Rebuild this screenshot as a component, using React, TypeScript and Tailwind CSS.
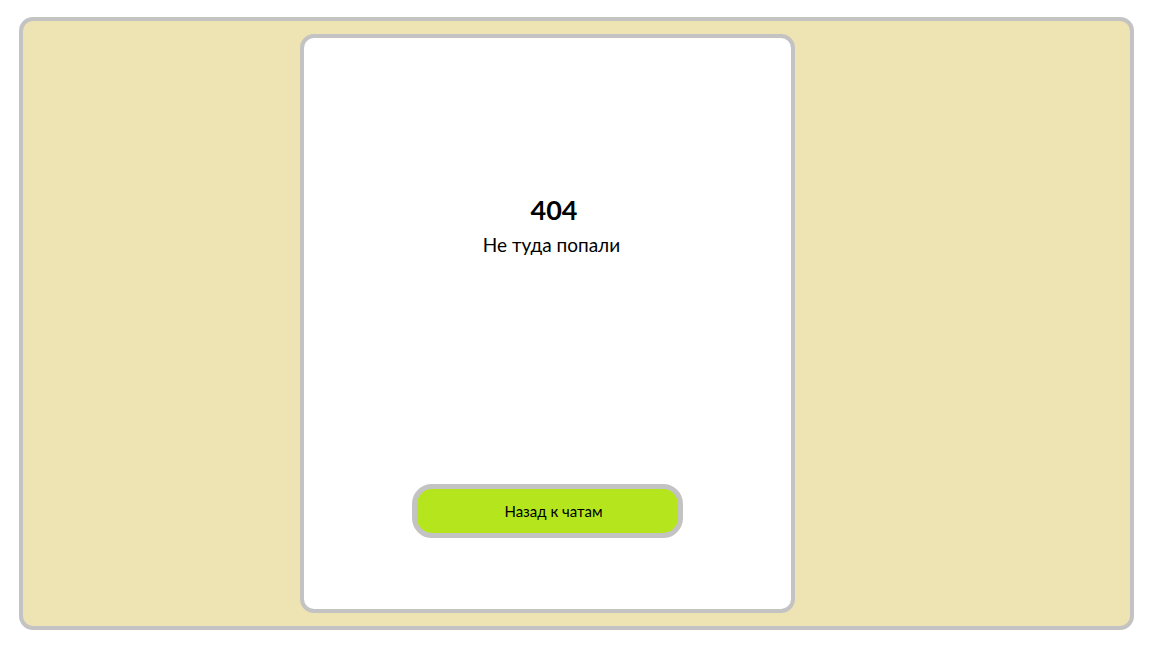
export default function App() {
  return (
    <div
      className="h-[648px] w-full bg-white pt-[17px] pr-[18px] pb-[18px] pl-[19px]"
      style={{ fontFamily: '"Lato", "Open Sans", sans-serif' }}
    >
      <div className="h-full rounded-[14px] border-4 border-[#c3c3c3] bg-[#eee3b2] py-[13px] pl-[277px]">
        <div className="flex h-full w-[495px] flex-col items-center rounded-[14px] border-4 border-[#c3c3c3] bg-white">
          <div className="mt-[156px] flex flex-col items-center pl-[8px]">
            <h1 className="ml-[5px] text-[27px] font-bold leading-[32px] text-black">404</h1>
            <p className="mt-[7px] text-[19px] leading-[24px] text-black">Не туда попали</p>
          </div>
          <button className="mt-auto mb-[71px] h-[54px] w-[271px] rounded-[20px] border-[5px] border-[#c3c3c3] bg-[#b5e61d] pl-[12px] text-[15px] text-black">
            Назад к чатам
          </button>
        </div>
      </div>
    </div>
  );
}
